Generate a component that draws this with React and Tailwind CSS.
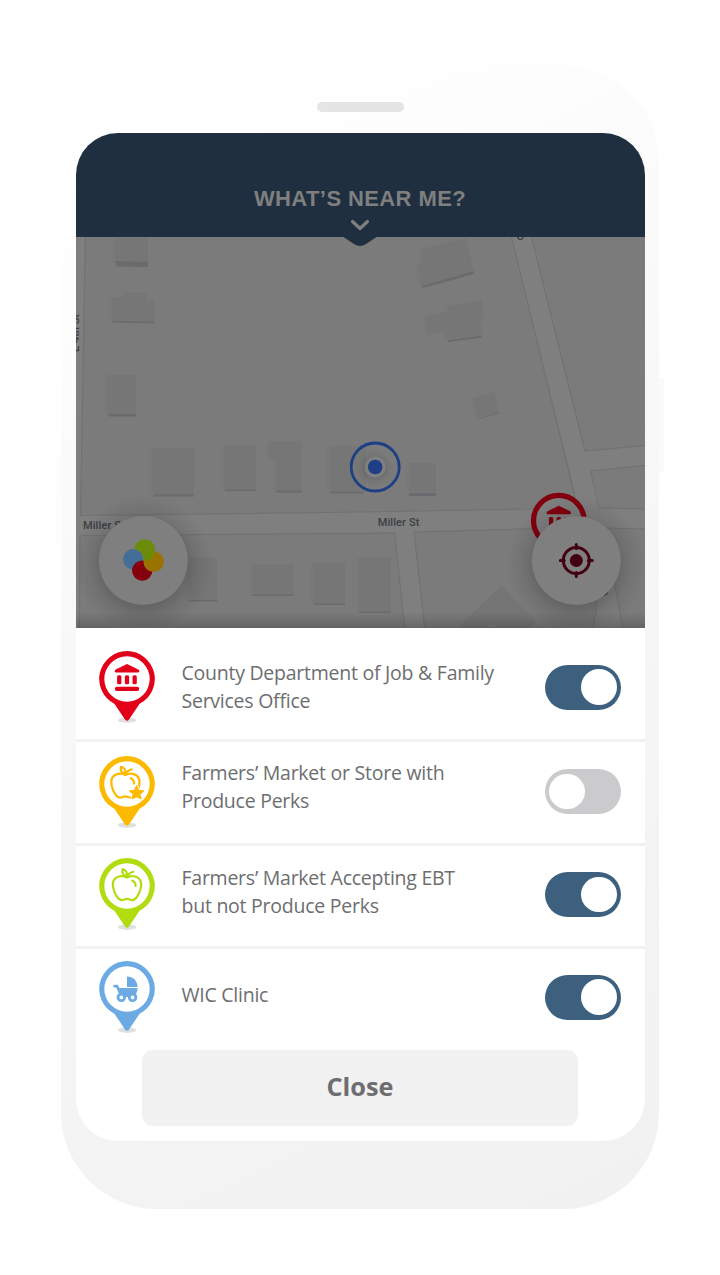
const PIN = {
  red: '#e30019',
  yellow: '#fbba00',
  green: '#b1dc0f',
  blue: '#6caae4',
};

function Bank({ color }) {
  return (
    <g fill={color}>
      <path d="M28 13 L39.3 18.6 Q40.2 19.2 40.2 20.3 Q40.2 21.6 38.8 21.6 H17.2 Q15.8 21.6 15.8 20.3 Q15.8 19.2 16.7 18.6 Z" />
      <rect x="18.1" y="24.3" width="4.3" height="9" rx="1.5" />
      <rect x="25.8" y="24.3" width="4.3" height="9" rx="1.5" />
      <rect x="33.5" y="24.3" width="4.3" height="9" rx="1.5" />
      <rect x="15.8" y="35.8" width="24.4" height="4.2" rx="2" />
    </g>
  );
}

const APPLE =
  'M28 19.5 C24 17.2 17.5 17.6 14.9 22 C12.6 26 14.5 34 18 38.8 C20.5 42.4 23.5 42.4 25.4 41.4 Q28 40.2 30.6 41.4 C32.5 42.4 35.5 42.4 38 38.8 C41.5 34 43.4 26 41.1 22 C38.5 17.6 32 17.2 28 19.5 Z';

function Apple({ color }) {
  return (
    <g fill="none" stroke={color} strokeWidth="2.2" strokeLinecap="round" strokeLinejoin="round">
      <path d={APPLE} />
      <path d="M28 18.5 C23.5 17 22.8 14 23.6 11.2 C27.4 12.2 28.4 15 28 18.5 Q30.5 14.7 34.2 13.7" />
      <path d="M33.3 22.7 Q36.8 24 36.6 28" />
    </g>
  );
}

const STAR =
  'M37.6 30 L39.6 34.4 L44.4 34.9 L40.8 38 L41.9 42.7 L37.6 40.3 L33.3 42.7 L34.4 38 L30.8 34.9 L35.6 34.4 Z';

function AppleStar({ color }) {
  return (
    <g>
      <g transform="translate(-1.6 -0.4)">
        <Apple color={color} />
      </g>
      <path d={STAR} fill="#fff" stroke="#fff" strokeWidth="3.2" strokeLinejoin="round" />
      <path d={STAR} fill={color} stroke={color} strokeWidth="1.4" strokeLinejoin="round" />
    </g>
  );
}

function Stroller({ color }) {
  return (
    <g fill={color}>
      <path d="M28 15.4 C33.8 15.4 38.6 19.5 38.6 26 H28 Z" />
      <path d="M15.3 23.8 H18 Q19 23.8 19.4 24.8 L20.3 27.1 H38.6 Q38.6 32 35.5 34.6 H22 Q19 32.6 18.3 29 L17.3 26.4 H15.3 Q14.2 26.2 14.2 25.1 Q14.2 24 15.3 23.8 Z" />
      <rect x="21" y="32" width="15" height="4" />
      <circle cx="22.3" cy="36.4" r="3.3" fill="#fff" stroke={color} strokeWidth="2.8" />
      <circle cx="33.6" cy="36.4" r="3.3" fill="#fff" stroke={color} strokeWidth="2.8" />
    </g>
  );
}

function Pin({ color, children }) {
  return (
    <svg className="h-[73px] w-14 shrink-0" viewBox="0 0 56 73">
      <ellipse cx="28" cy="69.2" rx="9.2" ry="2.7" fill="#e0e0e0" />
      <path
        d="M28 0 A28 28 0 0 1 40.4 53 L30 68.6 Q28 71 26 68.6 L15.6 53 A28 28 0 0 1 28 0 Z"
        fill={color}
      />
      <circle cx="28" cy="28" r="22.7" fill="#fff" />
      {children}
    </svg>
  );
}

function Toggle({ on }) {
  return (
    <span
      className={
        'flex h-[45px] w-[76.5px] shrink-0 items-center rounded-full px-[4.5px] ' +
        (on ? 'justify-end bg-[#3d607f]' : 'justify-start bg-[#cbcbcd]')
      }
    >
      <span className="size-[35.5px] rounded-full bg-white" />
    </span>
  );
}

function Row({ row, pin, text, toggle, color, icon, lines, on }) {
  return (
    <li className={'flex items-start border-[#f2f2f2] pl-[23.5px] pr-[23.5px] ' + row}>
      <div className={pin}>
        <Pin color={color}>{icon}</Pin>
      </div>
      <p className={'ml-[26.5px] grow whitespace-nowrap text-[19.5px] leading-[28.5px] tracking-[-0.25px] text-[#6d6e70] ' + text}>
        {lines.map((l) => (
          <span key={l} className="block">
            {l}
          </span>
        ))}
      </p>
      <div className={toggle}>
        <Toggle on={on} />
      </div>
    </li>
  );
}

const BUILDINGS = [
  ['115,238 148,238 148,262 115,262', '115,261 148,262 148,267 117,266.5'],
  ['112,297 124,297 124,292 147,292 147,301 154,301 154,321 112,321', '112,321 154,321.5 154,323.5 113,322.5'],
  ['107,375 136,375 136,414 107,414', '108,414 136,414 136,416.5 109,416.5'],
  ['152,448 194,448 194,494 152,494', '153,494.5 194,494.5 194,496.5 153,496.5'],
  ['224,446 256,446 256,489 224,489', '225,489.5 256,489.5 256,491 225,491'],
  ['269,441 302,441 302,490 276,490 276,459 269,459', '276,490.5 302,490.5 302,492.5 276,492.5'],
  ['329,446 366,446 366,491 329,491', '330,491.5 364,491.5 364,493.5 330,493.5'],
  ['409,463 436,463 436,492 409,492', '409,493 436,493 436,496 409,496'],
  ['188,557 217,557 217,600 188,600', '189,600 217,600 217,601.5 189,601.5'],
  ['252,564 294,564 294,594 252,594', '252,594.5 294,594.5 294,596 252,596'],
  ['313,562 345,562 345,603 313,603', '314,603.5 345,603.5 345,605 314,605'],
  ['359,557 391,557 391,611 359,611', '359,611.5 391,611.5 391,613 359,613'],
  ['421,249 466,238 474,271 422,286 417,265 423,261', '422,286 474,271 474,274 423,288'],
  ['425,316 448,312 448,306 482,300 485,318 480,319 482,336 448,341 446,332 427,335', '448,340.5 482,335.5 482,337.5 448,342'],
  ['472.5,399 494,392 500,413 479,419', '479,418.5 500,412.5 500,413 479,419'],
];

function Map() {
  return (
    <svg className="block h-full w-full" viewBox="76 237 569 391.5" preserveAspectRatio="none">
      <defs>
        <linearGradient id="fade" x1="0" y1="0" x2="0" y2="1">
          <stop offset="0" stopColor="#000" stopOpacity="0" />
          <stop offset="1" stopColor="#000" stopOpacity="0.2" />
        </linearGradient>
        <radialGradient id="glow">
          <stop offset="0.55" stopColor="#000" stopOpacity="0.2" />
          <stop offset="0.75" stopColor="#000" stopOpacity="0.08" />
          <stop offset="1" stopColor="#000" stopOpacity="0" />
        </radialGradient>
      </defs>
      <rect x="75" y="236" width="571" height="394" fill="#7b7b7b" />
      <g fill="#7f7f7f" stroke="#727272" strokeWidth="1.2">
        <path d="M74 230 H85.5 L82 430 L80.5 515.5 L360 512 L532 509 L575 496 L560 435 L511 235 H531 L585 451 L648 445 V465 L591 471 L597.5 508 L648 509 V529 L605 528 L623 630 H593 L597 604 L560 528 L414 532 L425 630 H405 L394.5 533 L80 535.5 L79.5 630 H74 Z" />
      </g>
      <path d="M533 509.5 L576 509 L574 496 L590 471 L598 508 L610 527 L560 529 Z" fill="#7f7f7f" />
      <path d="M560 435 L575 498 L575.5 508" fill="none" stroke="#727272" strokeWidth="1.2" />
      {BUILDINGS.map(([top, edge]) => (
        <g key={top}>
          <polygon points={top} fill="#797979" transform="translate(-2.5 1)" />
          <polygon points={top} fill="#767676" />
          <polygon points={edge} fill="#6b6b6f" />
        </g>
      ))}
      <path d="M461 625 L501.5 585 L536 621 L530 629 H461 Z" fill="#757575" />
      <path d="M484 628 L493 621 L499 628 Z" fill="#7b7b7b" stroke="#6f6f6f" />
      <g fill="#3b4042" fontFamily="Roboto, sans-serif" fontSize="11" fontWeight="500">
        <text x="83" y="529" letterSpacing="0.1">Miller St</text>
        <text x="377.7" y="526" letterSpacing="0.1">Miller St</text>
        <text x="0" y="0" transform="translate(79 352) rotate(-90)">E 4th St</text>
        <text x="0" y="0" transform="translate(516.5 240.3)">O</text>
      </g>
      <path d="M604 595.5 L608 592.5" stroke="#3b4042" strokeWidth="1.5" />
      <circle cx="375.2" cy="467" r="24" fill="#7b7b7b" fillOpacity="0.35" stroke="#1e3f86" strokeWidth="2.8" />
      <circle cx="375.2" cy="468" r="19" fill="url(#glow)" opacity="0.5" />
      <circle cx="375.2" cy="467" r="10.5" fill="#808080" />
      <circle cx="375.2" cy="467" r="7.3" fill="#1e3f86" />
      <g transform="translate(530.8 492.7)">
        <circle cx="28" cy="28" r="25.3" fill="#7f7f7f" stroke="#82000e" strokeWidth="5.3" />
        <Bank color="#82000e" />
      </g>
      <circle cx="143.3" cy="565" r="70" fill="url(#glow)" />
      <circle cx="576.3" cy="565" r="70" fill="url(#glow)" />
      <circle cx="143.3" cy="560.5" r="44.5" fill="#7f7f7f" />
      <circle cx="133.3" cy="559.3" r="10.2" fill="#446d97" />
      <circle cx="142.2" cy="570.6" r="10.2" fill="#84000f" />
      <circle cx="153.6" cy="561.7" r="10.2" fill="#9a7200" />
      <path d="M154.9 551.5 A10.2 10.2 0 1 0 134.7 549.2 A10.2 10.2 0 0 1 143.4 560.5 Q147.5 561 149 560 A10.2 10.2 0 0 0 154.9 551.5 Z" fill="#6d8b0a" />
      <circle cx="576.3" cy="560.5" r="44.5" fill="#7f7f7f" />
      <g stroke="#420010" strokeWidth="3" strokeLinecap="round" fill="none">
        <circle cx="576.3" cy="560.5" r="13" />
        <path d="M576.3 544.5 v4 M576.3 572.5 v4 M560.3 560.5 h4 M588.3 560.5 h4" />
        <circle cx="576.3" cy="560.5" r="6.5" fill="#420010" stroke="none" />
      </g>
      <rect x="75" y="612" width="571" height="17" fill="url(#fade)" />
    </svg>
  );
}

const ROWS = [
  {
    row: 'h-[114px] border-b-3',
    pin: 'pt-[23.3px]',
    text: 'pt-[30.5px]',
    toggle: 'pt-[36.7px]',
    color: PIN.red,
    icon: <Bank color={PIN.red} />,
    lines: ['County Department of Job & Family', 'Services Office'],
    on: true,
  },
  {
    row: 'h-[104px] border-b-3',
    pin: 'pt-[13.7px]',
    text: 'pt-[16.5px]',
    toggle: 'pt-[27px]',
    color: PIN.yellow,
    icon: <AppleStar color={PIN.yellow} />,
    lines: ['Farmers’ Market or Store with', 'Produce Perks'],
    on: false,
  },
  {
    row: 'h-[103px] border-b-3',
    pin: 'pt-[12.3px]',
    text: 'pt-[17.5px]',
    toggle: 'pt-[26px]',
    color: PIN.green,
    icon: <Apple color={PIN.green} />,
    lines: ['Farmers’ Market Accepting EBT', 'but not Produce Perks'],
    on: true,
  },
  {
    row: 'h-[101px]',
    pin: 'pt-[12px]',
    text: 'pt-[31.5px]',
    toggle: 'pt-[25.5px]',
    color: PIN.blue,
    icon: <Stroller color={PIN.blue} />,
    lines: ['WIC Clinic'],
    on: true,
  },
];

export default function App() {
  return (
    <div className="flex h-[1275px] w-[720px] justify-center overflow-hidden bg-white pt-[65px] font-['Open_Sans',sans-serif]">
      <div className="relative h-[1144px] w-[598px] rounded-[96px] bg-linear-[155deg,#ffffff_8%,#f8f8f8_42%,#f1f1f1] px-[14.5px] pt-[36.5px]">
        <span className="absolute top-[313px] -right-[5px] h-[94px] w-[5px] rounded-r-[2px] bg-[#fafafa]" />
        <span className="absolute top-[391px] -left-[5px] h-[90px] w-[5px] rounded-l-[2px] bg-[#fdfdfd]" />
        <div className="mx-auto h-[10px] w-[87px] rounded-full bg-[#e5e5e5]" />
        <main className="mt-[21.5px] flex h-[1008px] w-[569px] flex-col overflow-hidden rounded-[42px] bg-white">
          <header className="relative flex h-[103.5px] shrink-0 flex-col items-center bg-[#1f2f3f] pt-[51px] text-[#7f7f7f]">
            <h1 className="whitespace-nowrap font-['Liberation_Sans',Arial,sans-serif] text-[22px] leading-[30px] font-bold tracking-[0.4px]">
              WHAT’S NEAR ME?
            </h1>
            <svg className="mt-[5px] h-[13px] w-5" viewBox="0 0 20 13">
              <path d="M2.5 2.5 L10 9.5 L17.5 2.5" fill="none" stroke="#7f7f7f" strokeWidth="3.2" strokeLinecap="round" strokeLinejoin="round" />
            </svg>
            <svg className="absolute top-[103px] left-1/2 z-10 h-[11px] w-10 -translate-x-1/2" viewBox="0 0 40 11">
              <path d="M2 0 L14 8 Q20 12 26 8 L38 0 Z" fill="#1f2f3f" />
            </svg>
          </header>
          <div className="h-[391.5px] shrink-0">
            <Map />
          </div>
          <ul className="shrink-0">
            {ROWS.map((r) => (
              <Row key={r.lines[0]} {...r} />
            ))}
          </ul>
          <button className="mx-auto h-[76px] w-[436.5px] shrink-0 rounded-[11px] bg-[#f1f1f1] pb-[2px] text-[25.3px] leading-none font-bold text-[#6d6e70]">
            Close
          </button>
        </main>
      </div>
    </div>
  );
}
